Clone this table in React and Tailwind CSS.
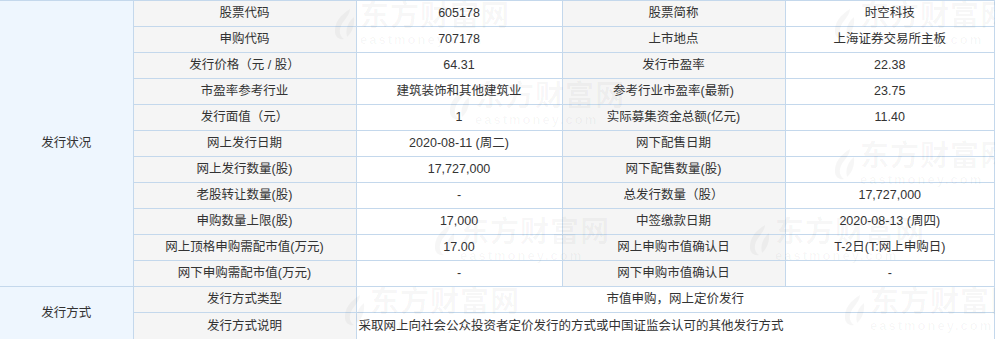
import React from 'react';

const rows = [
  ['股票代码', '605178', '股票简称', '时空科技'],
  ['申购代码', '707178', '上市地点', '上海证券交易所主板'],
  ['发行价格（元 / 股）', '64.31', '发行市盈率', '22.38'],
  ['市盈率参考行业', '建筑装饰和其他建筑业', '参考行业市盈率(最新)', '23.75'],
  ['发行面值（元）', '1', '实际募集资金总额(亿元)', '11.40'],
  ['网上发行日期', '2020-08-11 (周二)', '网下配售日期', ''],
  ['网上发行数量(股)', '17,727,000', '网下配售数量(股)', ''],
  ['老股转让数量(股)', '-', '总发行数量（股）', '17,727,000'],
  ['申购数量上限(股)', '17,000', '中签缴款日期', '2020-08-13 (周四)'],
  ['网上顶格申购需配市值(万元)', '17.00', '网上申购市值确认日', 'T-2日(T:网上申购日)'],
  ['网下申购需配市值(万元)', '-', '网下申购市值确认日', '-'],
];

// faint repeating site watermark
const marks = [
  { x: 330, y: 2 },
  { x: 830, y: 2 },
  { x: 445, y: 82 },
  { x: 830, y: 142 },
  { x: 430, y: 218 },
  { x: 745, y: 218 },
  { x: 340, y: 288 },
  { x: 840, y: 288 },
];

const Watermark = ({ x, y }) => (
  <div
    aria-hidden="true"
    className="absolute pointer-events-none select-none flex items-center gap-1 whitespace-nowrap text-black/[0.035]"
    style={{ left: x, top: y }}
  >
    <svg width="26" height="34" viewBox="0 0 26 34" className="fill-current shrink-0">
      <path d="M20 2 C10 8 4 16 5 26 C6 31 10 33 14 32 C8 28 9 20 14 14 C17 10 20 6 20 2 Z" />
      <path d="M24 10 C18 15 15 22 17 30 C22 26 25 18 24 10 Z" />
    </svg>
    <div className="flex flex-col items-start leading-none">
      <span className="text-[29px] font-bold tracking-[1px]">东方财富网</span>
      <span className="text-[13px] font-bold tracking-[2px] mt-[2px]">eastmoney.com</span>
    </div>
  </div>
);

const App = () => {
  const cell = 'border border-[#c4d8ec] h-[26px] px-[2px] text-center align-middle';
  return (
    <div
      className="relative w-[995px] h-[339px] overflow-hidden bg-white text-[#333] text-[12.5px] leading-none"
      style={{ fontFamily: '"Liberation Sans", "Noto Sans CJK SC", sans-serif' }}
    >
      <table className="w-[995px] table-fixed border-collapse border-t border-t-[#6b9bd8]">
        <colgroup>
          <col className="w-[133px]" />
          <col className="w-[223px]" />
          <col className="w-[206px]" />
          <col className="w-[223px]" />
          <col />
        </colgroup>
        <tbody>
          {rows.map((r, i) => (
            <tr key={r[0]}>
              {i === 0 && (
                <td rowSpan={11} className={`${cell} border-l-0 bg-[#eef6fe]`}>
                  发行状况
                </td>
              )}
              <td className={`${cell} bg-[#f5f5f5]`}>{r[0]}</td>
              <td className={`${cell} bg-white`}>{r[1]}</td>
              <td className={`${cell} bg-[#f5f5f5]`}>{r[2]}</td>
              <td className={`${cell} bg-white`}>{r[3]}</td>
            </tr>
          ))}
          <tr>
            <td rowSpan={2} className={`${cell} border-l-0 border-b-0 bg-[#eef6fe]`}>
              发行方式
            </td>
            <td className={`${cell} bg-[#f5f5f5]`}>发行方式类型</td>
            <td colSpan={3} className={`${cell} bg-white`}>
              市值申购，网上定价发行
            </td>
          </tr>
          <tr>
            <td className={`${cell} border-b-0 bg-[#f5f5f5]`}>发行方式说明</td>
            <td colSpan={3} className={`${cell} border-b-0 bg-white text-left`}>
              采取网上向社会公众投资者定价发行的方式或中国证监会认可的其他发行方式
            </td>
          </tr>
        </tbody>
      </table>
      {marks.map((m) => (
        <Watermark key={`${m.x}-${m.y}`} x={m.x} y={m.y} />
      ))}
    </div>
  );
};

export default App;
